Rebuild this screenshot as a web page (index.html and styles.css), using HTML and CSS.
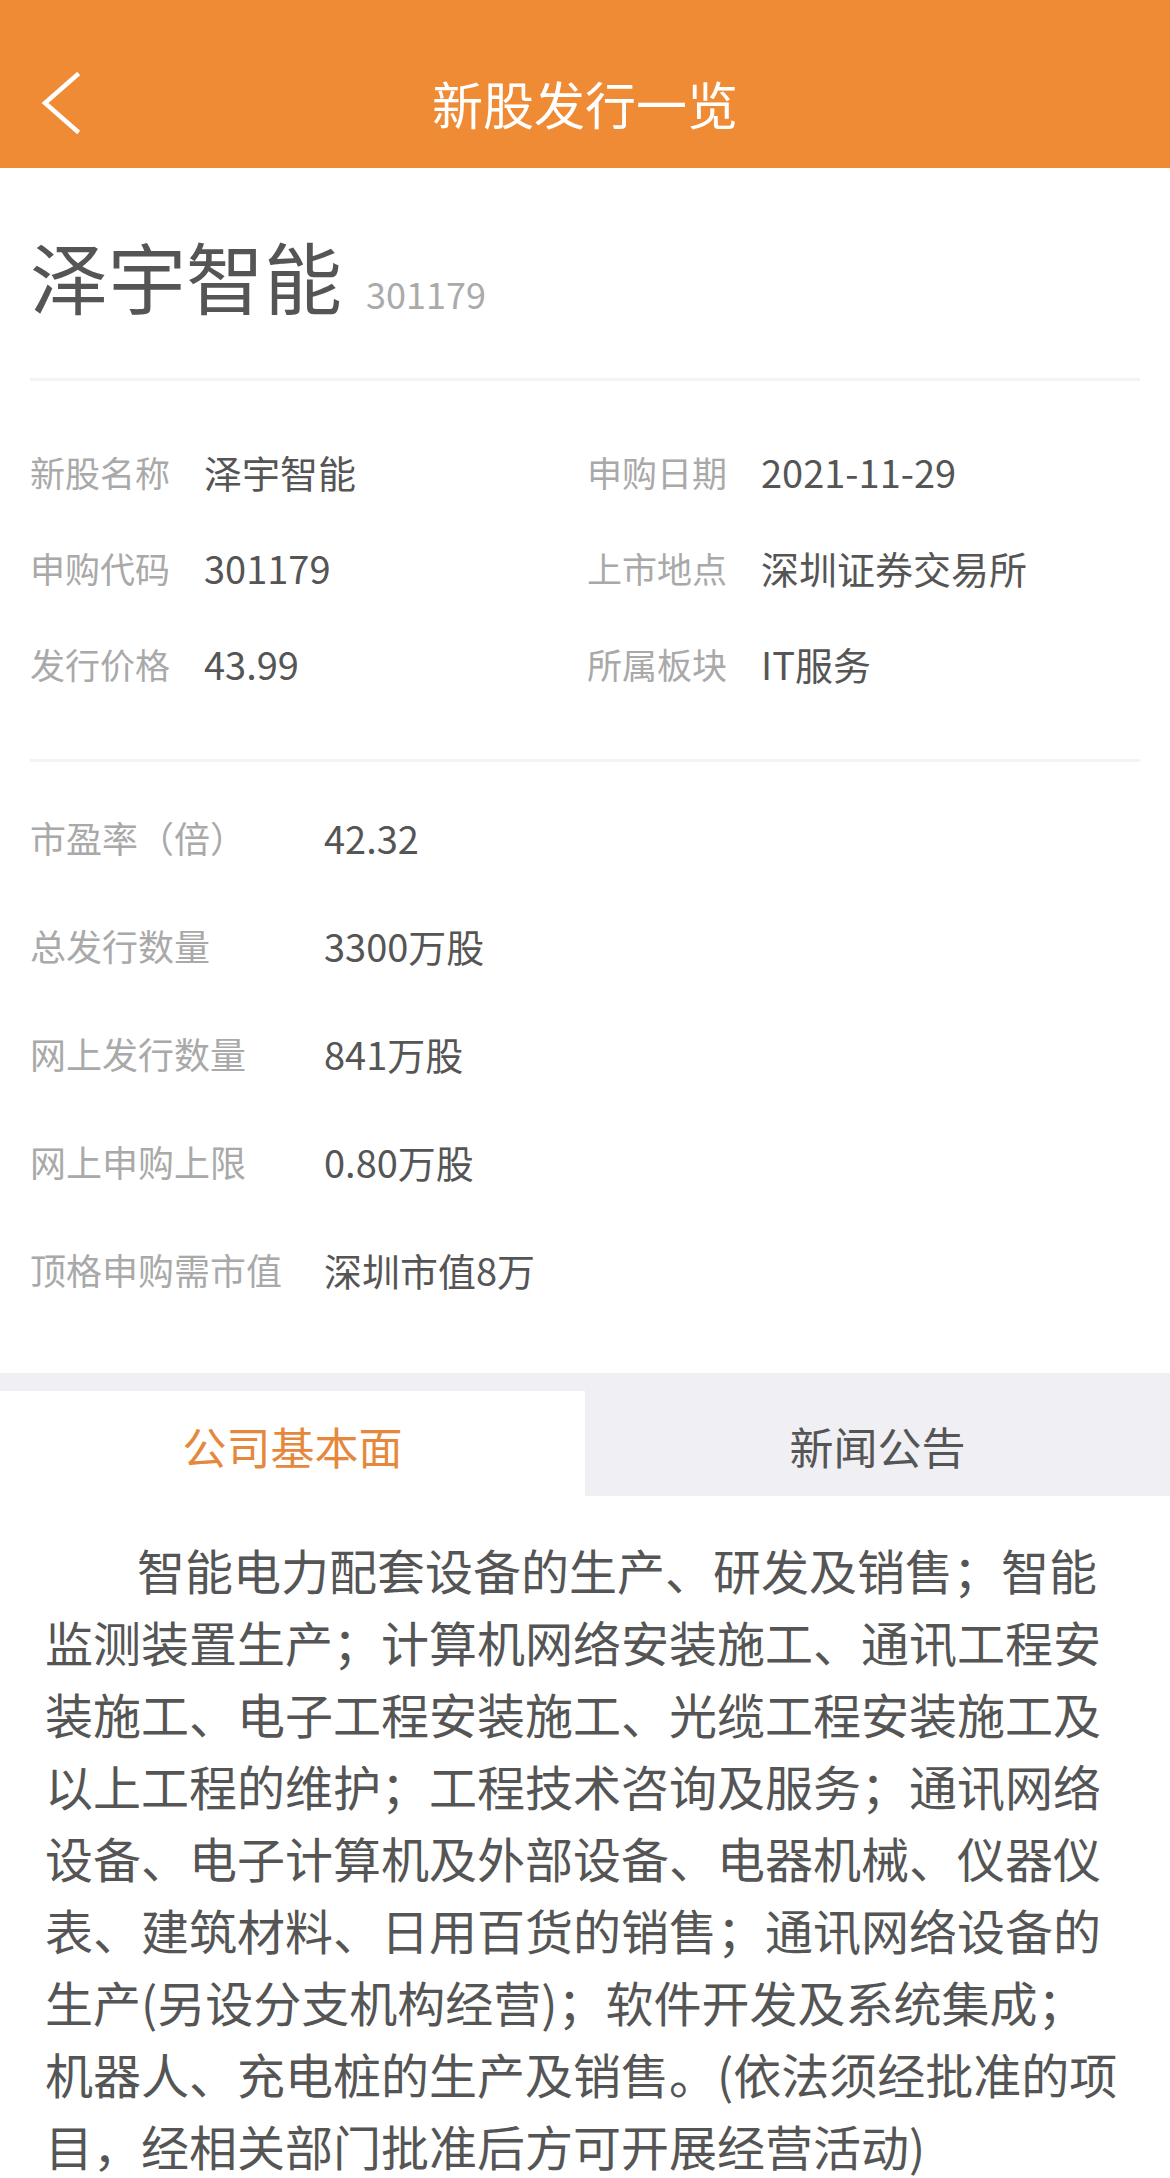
FILE: index.html
```html
<!DOCTYPE html>
<html lang="zh-CN">
<head>
<meta charset="utf-8">
<title>新股发行一览</title>
<link rel="stylesheet" href="styles.css">
</head>
<body>
<div class="page">
  <header class="nav">
    <div class="nav-left">
      <svg class="back" width="40" height="64" viewBox="0 0 40 64">
        <polyline points="36,4 4,32 36,60" fill="none" stroke="#ffffff" stroke-width="4.5" stroke-linecap="square" stroke-linejoin="miter"/>
      </svg>
    </div>
    <div class="nav-title">新股发行一览</div>
    <div class="nav-right"></div>
  </header>

  <section class="name-block">
    <span class="stock-name">泽宇智能</span>
    <span class="stock-code">301179</span>
  </section>
  <div class="divider"></div>

  <section class="info-grid">
    <div class="cell"><span class="label">新股名称</span><span class="value">泽宇智能</span></div>
    <div class="cell"><span class="label">申购日期</span><span class="value">2021-11-29</span></div>
    <div class="cell"><span class="label">申购代码</span><span class="value">301179</span></div>
    <div class="cell"><span class="label">上市地点</span><span class="value">深圳证券交易所</span></div>
    <div class="cell"><span class="label">发行价格</span><span class="value">43.99</span></div>
    <div class="cell"><span class="label">所属板块</span><span class="value">IT服务</span></div>
  </section>
  <div class="divider"></div>

  <section class="detail-list">
    <div class="drow"><span class="dlabel">市盈率（倍）</span><span class="dvalue">42.32</span></div>
    <div class="drow"><span class="dlabel">总发行数量</span><span class="dvalue">3300万股</span></div>
    <div class="drow"><span class="dlabel">网上发行数量</span><span class="dvalue">841万股</span></div>
    <div class="drow"><span class="dlabel">网上申购上限</span><span class="dvalue">0.80万股</span></div>
    <div class="drow"><span class="dlabel">顶格申购需市值</span><span class="dvalue">深圳市值8万</span></div>
  </section>

  <nav class="tabs">
    <div class="tab active">公司基本面</div>
    <div class="tab">新闻公告</div>
  </nav>

  <p class="desc">智能电力配套设备的生产、研发及销售；智能监测装置生产；计算机网络安装施工、通讯工程安装施工、电子工程安装施工、光缆工程安装施工及以上工程的维护；工程技术咨询及服务；通讯网络设备、电子计算机及外部设备、电器机械、仪器仪表、建筑材料、日用百货的销售；通讯网络设备的生产(另设分支机构经营)；软件开发及系统集成；机器人、充电桩的生产及销售。(依法须经批准的项目，经相关部门批准后方可开展经营活动)</p>
</div>
</body>
</html>
```

FILE: styles.css
```css
* {
  box-sizing: border-box;
}

html, body {
  margin: 0;
  padding: 0;
  background: #ffffff;
}

body {
  font-family: "Noto Sans CJK SC", "Noto Sans", sans-serif;
  color: #555555;
}

.page {
  width: 1170px;
}

/* Header */
.nav {
  height: 168px;
  padding-top: 38px;
  background: #f08b35;
  display: grid;
  grid-template-columns: 150px 1fr 150px;
  align-items: center;
}

.nav-left {
  display: flex;
  align-items: center;
}

.back {
  display: block;
  margin-left: 41px;
}

.nav-title {
  text-align: center;
  color: #ffffff;
  font-size: 51px;
  line-height: 60px;
  font-weight: 400;
}

/* Name block */
.name-block {
  padding: 68px 30px 0;
  height: 210px;
  display: flex;
  align-items: baseline;
}

.stock-name {
  font-size: 78px;
  line-height: 78px;
  color: #555555;
}

.stock-code {
  font-size: 36px;
  color: #aaaaaa;
  margin-left: 24px;
}

.divider {
  height: 3px;
  margin: 0 30px;
  background: #f3f3f3;
}

/* Info grid */
.info-grid {
  display: grid;
  grid-template-columns: 557px 1fr;
  grid-auto-rows: 96px;
  padding: 42px 30px 48px;
}

.cell {
  display: flex;
  align-items: center;
}

.label {
  width: 174px;
  flex: none;
  font-size: 35px;
  color: #a9a9a9;
}

.value {
  font-size: 38px;
  color: #555555;
}

/* Detail list */
.detail-list {
  padding: 21px 30px 50px;
  display: flex;
  flex-direction: column;
}

.drow {
  height: 108px;
  display: flex;
  align-items: center;
}

.dlabel {
  width: 294px;
  flex: none;
  font-size: 36px;
  color: #a9a9a9;
}

.dvalue {
  font-size: 38px;
  color: #555555;
}

/* Tabs */
.tabs {
  background: #efeff4;
  padding-top: 18px;
  display: grid;
  grid-template-columns: 585px 585px;
}

.tab {
  height: 105px;
  padding-top: 4px;
  display: flex;
  align-items: center;
  justify-content: center;
  font-size: 44px;
  color: #555555;
}

.tab.active {
  background: #ffffff;
  color: #e5883c;
}

/* Description */
.desc {
  margin: 0;
  padding: 37px 45px 0 45px;
  font-size: 48px;
  line-height: 72px;
  text-indent: 92px;
  color: #555555;
}
```
